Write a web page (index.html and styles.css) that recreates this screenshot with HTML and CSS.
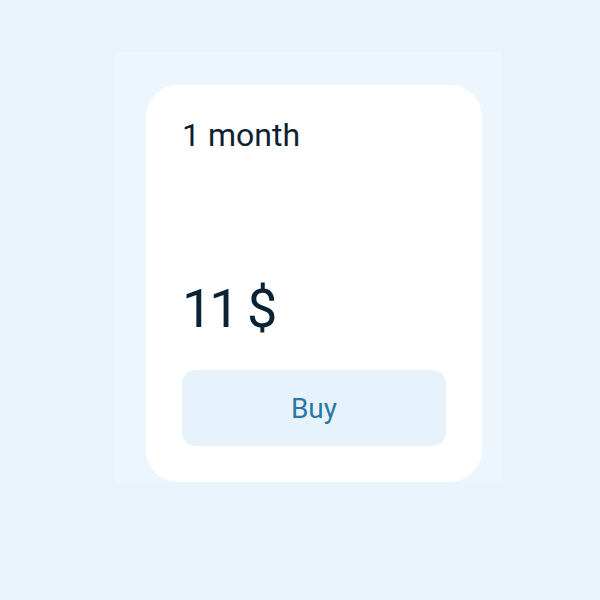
FILE: index.html
```html
<!DOCTYPE html>
<html lang="en">
<head>
    <meta charset="UTF-8">
    <title>Plan</title>
    <link rel="stylesheet" href="styles.css">
</head>
<body>
    <div class="panel">
        <div class="plan-card">
            <h2 class="plan-title">1 month</h2>
            <div class="plan-price">11 $</div>
            <button class="buy-btn">Buy</button>
        </div>
    </div>
</body>
</html>
```

FILE: styles.css
```css
body {
    margin: 0;
    background-color: #e8f3fc;
    font-family: Roboto, "Liberation Sans", sans-serif;
    color: #0a2233;
}
.panel {
    width: 336px;
    margin: 52px 0 0 115px;
    padding: 33px 20px 0 31px;
    background-color: #edf6fd;
}
.plan-card {
    width: 336px;
    height: 397px;
    box-sizing: border-box;
    padding: 30px 36px 36px 36px;
    background-color: #fff;
    border-radius: 32px;
    display: flex;
    flex-direction: column;
}
.plan-title {
    margin: 0;
    font-size: 32px;
    font-weight: 400;
    line-height: 40px;
}
.plan-price {
    margin-top: auto;
    font-size: 54px;
    line-height: 60px;
    letter-spacing: -3px;
    margin-bottom: 31px;
}
.buy-btn {
    height: 76px;
    border: none;
    border-radius: 14px;
    background-color: #e6f3fc;
    color: #2a78a8;
    font-family: inherit;
    font-size: 28px;
    cursor: pointer;
}
```
